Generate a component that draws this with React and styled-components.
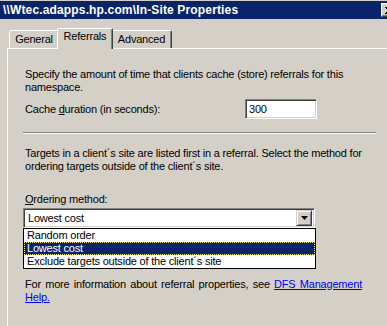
import React from "react";
import styled, { createGlobalStyle } from "styled-components";

const Global = createGlobalStyle`
  body {
    margin: 0;
  }
`;

const Window = styled.div`
  width: 387px;
  height: 326px;
  overflow: hidden;
  box-sizing: border-box;
  padding-top: 1px;
  background: #d4d0c8;
  font-family: "Liberation Sans", Arial, sans-serif;
  font-size: 11px;
  letter-spacing: -0.2px;
  color: #000;
`;

const TitleBar = styled.div`
  height: 18px;
  display: flex;
  align-items: center;
  padding-left: 3px;
  background: #0a246a;
  color: #fff;
  font-family: "Liberation Sans", Arial, sans-serif;
  font-weight: bold;
  font-size: 12px;
  letter-spacing: 0.15px;
  white-space: nowrap;
`;

const TitleText = styled.div`
  flex: 1;
`;

const CloseButton = styled.div`
  width: 16px;
  height: 14px;
  box-sizing: border-box;
  margin-right: -10px;
  background: #d4d0c8;
  border: 1px solid;
  border-color: #fff #404040 #404040 #fff;
  box-shadow: inset -1px -1px #808080;
  display: flex;
  align-items: center;
  justify-content: center;
`;

const Body = styled.div`
  padding: 9px 0 0 7px;
`;

const TabRow = styled.div`
  display: flex;
  align-items: flex-end;
  height: 20px;
  padding-left: 2px;
`;

const Tab = styled.div`
  position: relative;
  z-index: ${(p) => (p.$active ? 2 : 1)};
  box-sizing: border-box;
  width: ${(p) => p.$w}px;
  height: ${(p) => (p.$active ? 21 : 18)}px;
  margin: 0 ${(p) => (p.$active ? -2 : 0)}px ${(p) => (p.$active ? -1 : 0)}px;
  padding-top: ${(p) => (p.$active ? 1 : 2)}px;
  border: 1px solid;
  border-bottom: none;
  border-color: #fff #404040 transparent #fff;
  border-radius: 2px 2px 0 0;
  box-shadow: inset -1px 0 #808080;
  background: #d4d0c8;
  text-align: center;
  line-height: 13px;
`;

const Panel = styled.div`
  width: 400px;
  height: 300px;
  border-top: 1px solid #fff;
  border-left: 1px solid #fff;
  padding: 19px 0 0 17px;
`;

const Content = styled.div`
  position: relative;
  width: 351px;
`;

const Text = styled.p`
  margin: ${(p) => p.$top || 0}px 0 0;
  line-height: 13px;
`;

const FieldRow = styled.div`
  display: grid;
  grid-template-columns: 220px 72px;
  align-items: center;
  margin-top: 5px;
  height: 20px;
`;

const Sunken = styled.div`
  box-sizing: border-box;
  height: 20px;
  background: #fff;
  border: 1px solid;
  border-color: #808080 #fff #fff #808080;
  box-shadow: inset 1px 1px #404040, inset -1px -1px #d4d0c8;
  display: flex;
  align-items: center;
  padding: 0 2px 0 3px;
  line-height: 13px;
`;

const Separator = styled.div`
  margin: 13px 0 0 -2px;
  width: 353px;
  border-top: 1px solid #808080;
  border-bottom: 1px solid #fff;
`;

const Combo = styled(Sunken)`
  margin: 2px 0 0 -2px;
  width: 292px;
  padding: 0 2px 0 4px;
  justify-content: space-between;
`;

const ArrowButton = styled.div`
  box-sizing: border-box;
  width: 16px;
  height: 16px;
  background: #d4d0c8;
  border: 1px solid;
  border-color: #d4d0c8 #404040 #404040 #d4d0c8;
  box-shadow: inset 1px 1px #fff, inset -1px -1px #808080;
  display: flex;
  align-items: center;
  justify-content: center;
`;

const DropList = styled.div`
  position: absolute;
  left: -2px;
  top: 160px;
  width: 293px;
  box-sizing: border-box;
  border: 1px solid #000;
  background: #fff;
`;

const Option = styled.div`
  box-sizing: border-box;
  height: 13px;
  line-height: 11px;
  padding-left: 2px;
  border: 1px ${(p) => (p.$selected ? "dotted #f3eb9b" : "solid transparent")};
  background: ${(p) => (p.$selected ? "#0a246a" : "#fff")};
  color: ${(p) => (p.$selected ? "#fff" : "#000")};
  white-space: nowrap;
`;

const Footer = styled.p`
  margin: 50px 0 0;
  width: 337px;
  line-height: 13px;
  text-align: justify;
`;

const Link = styled.a`
  color: #0000ff;
  text-decoration: underline;
`;

const Key = styled.span`
  text-decoration: underline;
`;

const options = ["Random order", "Lowest cost", "Exclude targets outside of the client\u00b4s site"];

export default function App() {
  return (
    <>
      <Global />
      <Window>
        <TitleBar>
          <TitleText>\\Wtec.adapps.hp.com\In-Site Properties</TitleText>
          <CloseButton>
            <svg width="8" height="7" viewBox="0 0 8 7">
              <path d="M0 0l7 7M1 0l7 7M7 0L0 7M8 0L1 7" stroke="#000" strokeWidth="1" />
            </svg>
          </CloseButton>
        </TitleBar>
        <Body>
          <TabRow>
            <Tab $w={50}>General</Tab>
            <Tab $w={56} $active>Referrals</Tab>
            <Tab $w={61}>Advanced</Tab>
          </TabRow>
          <Panel>
            <Content>
              <Text>
                Specify the amount of time that clients cache (store) referrals for this namespace.
              </Text>
              <FieldRow>
                <span>
                  Cache <Key>d</Key>uration (in seconds):
                </span>
                <Sunken>300</Sunken>
              </FieldRow>
              <Separator />
              <Text $top={13}>
                Targets in a client´s site are listed first in a referral. Select the method for ordering
                targets outside of the client´s site.
              </Text>
              <Text $top={20}>
                <Key>O</Key>rdering method:
              </Text>
              <Combo>
                <span>Lowest cost</span>
                <ArrowButton>
                  <svg width="7" height="4" viewBox="0 0 7 4">
                    <path d="M0 0h7L3.5 4z" fill="#000" />
                  </svg>
                </ArrowButton>
              </Combo>
              <DropList>
                {options.map((o) => (
                  <Option key={o} $selected={o === "Lowest cost"}>
                    {o}
                  </Option>
                ))}
              </DropList>
              <Footer>
                For more information about referral properties, see <Link>DFS Management Help.</Link>
              </Footer>
            </Content>
          </Panel>
        </Body>
      </Window>
    </>
  );
}
